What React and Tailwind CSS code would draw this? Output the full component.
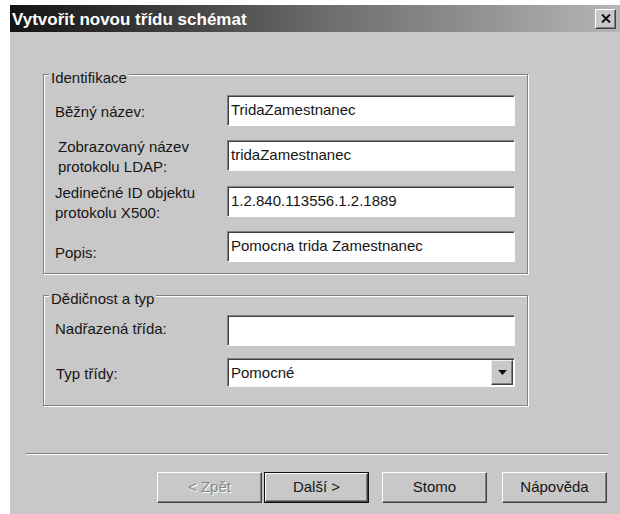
import React from "react";

// sunken white edit box, classic 3D look
function TextBox({ value = "", className = "" }) {
  return (
    <div
      className={`flex h-[31px] flex-1 items-center border border-[#808080] border-b-white border-r-white bg-white pl-[3px] text-[#161616] shadow-[inset_1px_1px_0_#404040] ${className}`}
    >
      {value}
    </div>
  );
}

function ComboBox({ value }) {
  return (
    <div className="flex h-[29px] flex-1 items-stretch border border-[#808080] border-b-white border-r-white bg-white shadow-[inset_1px_1px_0_#404040]">
      <div className="flex flex-1 items-center pl-[3px] pt-px text-[#161616]">{value}</div>
      <div className="my-px mr-px flex w-[22px] items-center justify-center border border-[#eeeeee] border-b-[#404040] border-r-[#404040] bg-[#c8c8c8] shadow-[inset_-1px_-1px_0_#808080]">
        <svg width="9" height="5" viewBox="0 0 9 5">
          <path d="M0 0h9L4.5 5z" fill="#111" />
        </svg>
      </div>
    </div>
  );
}

function GroupBox({ title, className = "", children }) {
  return (
    <div
      className={`relative w-[485px] border border-[#808080] shadow-[inset_1px_1px_0_#fff,1px_1px_0_#fff] ${className}`}
    >
      <span className="absolute left-[5px] top-[-7px] bg-[#c8c8c8] px-[2px] leading-[20px] text-[#161616]">
        {title}
      </span>
      {children}
    </div>
  );
}

function Row({ label, labelClass = "", className = "", children }) {
  return (
    <div className={`flex h-[31px] items-start ${className}`}>
      <div className={`w-[172px] shrink-0 leading-[20px] text-[#161616] ${labelClass}`}>{label}</div>
      {children}
    </div>
  );
}

function Button({ children, isDefault = false, disabled = false, className = "" }) {
  return (
    <div
      className={`h-[31px] w-[105px] bg-[#c8c8c8] ${isDefault ? "border border-[#111]" : ""} ${className}`}
    >
      <div className="flex h-full w-full items-center justify-center border border-white border-b-[#404040] border-r-[#404040] shadow-[inset_-1px_-1px_0_#808080]">
        <span
          className={
            disabled
              ? "text-[#868686] [text-shadow:1px_1px_0_#fff]"
              : "text-[#161616]"
          }
        >
          {children}
        </span>
      </div>
    </div>
  );
}

export default function App() {
  return (
    <div className="min-h-screen bg-white pl-[10px] pt-[5px] font-['Liberation_Sans',Arial,sans-serif] text-[15px]">
      <div className="flex h-[509px] w-[610px] flex-col bg-[#c8c8c8]">
        {/* title bar */}
        <div className="flex h-[27px] items-center justify-between bg-gradient-to-r from-[#141414] via-[#6a6a6a] to-[#b6b6b6] pl-[2px] pr-[4px]">
          <span className="pt-[3px] text-[17px] font-bold text-white">Vytvořit novou třídu schémat</span>
          <div className="flex h-[20px] w-[21px] items-center justify-center border border-white border-b-[#404040] border-r-[#404040] bg-[#c8c8c8] shadow-[inset_-1px_-1px_0_#808080]">
            <svg width="10" height="9" viewBox="0 0 10 9">
              <path d="M1 0.5l8 8M9 0.5l-8 8" stroke="#111" strokeWidth="2" />
            </svg>
          </div>
        </div>

        <div className="flex flex-col pl-[33px] pt-[42px]">
          <GroupBox title="Identifikace" className="h-[200px]">
            <div className="flex flex-col pl-[11px] pr-[12px] pt-[20px]">
              <Row label="Běžný název:" labelClass="pt-[7px]">
                <TextBox value="TridaZamestnanec" />
              </Row>
              <Row
                className="mt-[14px]"
                label={
                  <>
                    Zobrazovaný název
                    <br />
                    protokolu LDAP:
                  </>
                }
                labelClass="mt-[-3px] pl-[3px]"
              >
                <TextBox value="tridaZamestnanec" />
              </Row>
              <Row
                className="mt-[15px]"
                label={
                  <>
                    Jedinečné ID objektu
                    <br />
                    protokolu X500:
                  </>
                }
                labelClass="mt-[-3px]"
              >
                <TextBox value="1.2.840.113556.1.2.1889" />
              </Row>
              <Row className="mt-[14px]" label="Popis:" labelClass="pt-[12px]">
                <TextBox value="Pomocna trida Zamestnanec" />
              </Row>
            </div>
          </GroupBox>

          <GroupBox title="Dědičnost a typ" className="mt-[21px] h-[111px]">
            <div className="flex flex-col pl-[11px] pr-[12px] pt-[19px]">
              <Row label="Nadřazená třída:" labelClass="pt-[4px]">
                <TextBox />
              </Row>
              <Row className="mt-[12px] h-[29px]" label="Typ třídy:" labelClass="pt-[6px] pl-px">
                <ComboBox value="Pomocné" />
              </Row>
            </div>
          </GroupBox>
        </div>

        {/* wizard separator */}
        <div className="ml-[16px] mt-[47px] h-0 w-[582px] border-t border-[#808080] shadow-[0_1px_0_#fff]" />

        <div className="mt-[18px] flex justify-end pr-[13px]">
          <Button disabled>&lt; Zpět</Button>
          <Button isDefault className="ml-[2px]">
            Další &gt;
          </Button>
          <Button className="ml-[13px]">Stomo</Button>
          <Button className="ml-[15px]">Nápověda</Button>
        </div>
      </div>
    </div>
  );
}
